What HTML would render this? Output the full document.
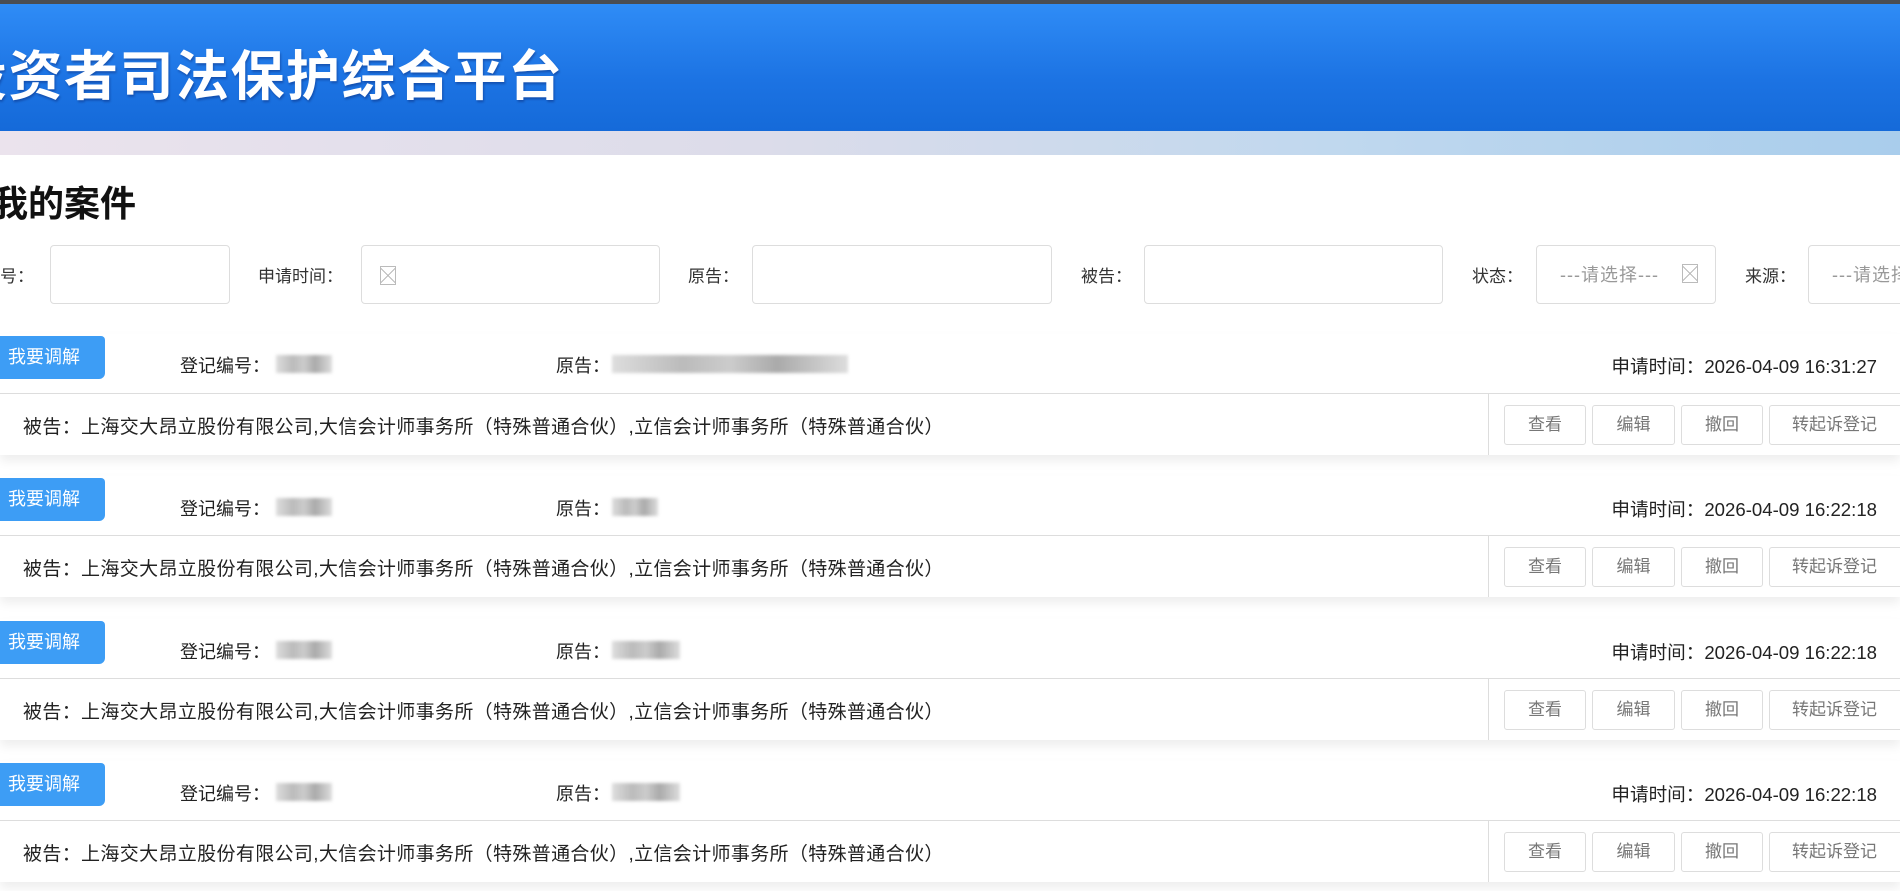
<!DOCTYPE html>
<html><head><meta charset="utf-8"><style>
*{margin:0;padding:0;box-sizing:border-box}
body{width:1900px;height:891px;overflow:hidden;background:#fff;position:relative;font-family:"Liberation Sans","Noto Sans CJK SC",sans-serif;color:#222}
.abs{position:absolute}
.top{left:0;top:0;width:1900px;height:4px;background:#4a4d52}
.hdr{left:0;top:4px;width:1900px;height:127px;background:linear-gradient(#2f8cf6,#1c73e3 60%,#156ad9)}
.htitle{left:-47px;top:32px;font-size:54px;font-weight:bold;color:#fff;letter-spacing:1.5px;white-space:nowrap;text-shadow:1px 2px 2px rgba(0,0,60,.3);font-family:"Noto Sans CJK SC",sans-serif}
.strip{left:0;top:131px;width:1900px;height:24px;background:linear-gradient(90deg,#ebe3ed,#dcdcea 40%,#c0d8ee 70%,#a9cdec)}
.h2{left:-8px;top:175px;font-size:36px;font-weight:bold;color:#111;font-family:"Noto Sans CJK SC",sans-serif}
.lbl{font-size:17px;color:#333;top:262px;white-space:nowrap}
.inp{top:245px;height:59px;border:1px solid #ddd;border-radius:4px;background:#fff}
.ph{font-size:18px;color:#999;top:261px;white-space:nowrap;letter-spacing:1px}
.xb{width:16px;height:19px;border:1.5px solid #bbb;background:linear-gradient(45deg,transparent 47%,#bbb 48%,#bbb 52%,transparent 53%),linear-gradient(-45deg,transparent 47%,#bbb 48%,#bbb 52%,transparent 53%)}
.card{left:0;width:1900px;height:121px;background:#fff;box-shadow:0 6px 10px rgba(0,0,0,.07)}
.card .line{position:absolute;left:0;top:59px;width:1900px;height:1px;background:#ddd}
.card .vl{position:absolute;left:1488px;top:60px;width:1px;height:61px;background:#ddd}
.btn{position:absolute;left:0;top:2px;width:105px;height:43px;background:#3d9df5;color:#fff;font-size:18px;line-height:43px;padding-left:8px;border-radius:0 4px 6px 0;white-space:nowrap}
.t{position:absolute;font-size:18px;color:#222;white-space:nowrap}
.d{position:absolute;font-size:18.6px;color:#222;white-space:nowrap}
.t2{position:absolute;font-size:19px;letter-spacing:0.35px;color:#222;white-space:nowrap}
.blur{position:absolute;height:18px;background:linear-gradient(90deg,#ddd,#bbb 30%,#ccc 50%,#aaa 70%,#ddd);filter:blur(1.5px)}
.ob{position:absolute;top:71px;height:40px;border:1px solid #ddd;border-radius:3px;font-size:17px;color:#777;text-align:center;line-height:38px;background:#fff}
</style></head><body>
<div class="abs top"></div>
<div class="abs hdr"></div>
<div class="abs htitle">投资者司法保护综合平台</div>
<div class="abs strip"></div>
<div class="abs h2">我的案件</div>

<div class="abs lbl" style="left:-17px">编号：</div>
<div class="abs inp" style="left:50px;width:180px"></div>
<div class="abs lbl" style="left:258px">申请时间：</div>
<div class="abs inp" style="left:361px;width:299px"></div>
<div class="abs xb" style="left:380px;top:266px"></div>
<div class="abs lbl" style="left:688px">原告：</div>
<div class="abs inp" style="left:752px;width:300px"></div>
<div class="abs lbl" style="left:1081px">被告：</div>
<div class="abs inp" style="left:1144px;width:299px"></div>
<div class="abs lbl" style="left:1472px">状态：</div>
<div class="abs inp" style="left:1536px;width:180px"></div>
<div class="abs ph" style="left:1560px">---请选择---</div>
<div class="abs xb" style="left:1682px;top:264px"></div>
<div class="abs lbl" style="left:1745px">来源：</div>
<div class="abs inp" style="left:1808px;width:120px"></div>
<div class="abs ph" style="left:1832px">---请选择---</div>

<div class="abs card" style="top:334px">
<div class="btn">我要调解</div>
<div class="t" style="left:180px;top:18px">登记编号：</div><div class="blur" style="left:276px;top:21px;width:56px"></div>
<div class="t" style="left:556px;top:18px">原告：</div><div class="blur" style="left:612px;top:21px;width:236px"></div>
<div class="d" style="right:23px;top:18px">申请时间：2026-04-09 16:31:27</div>
<div class="line"></div><div class="vl"></div>
<div class="t2" style="left:23px;top:78px">被告：上海交大昂立股份有限公司,大信会计师事务所（特殊普通合伙）,立信会计师事务所（特殊普通合伙）</div>
<div class="ob" style="left:1504px;width:82px">查看</div><div class="ob" style="left:1592px;width:83px">编辑</div><div class="ob" style="left:1681px;width:82px">撤回</div><div class="ob" style="left:1769px;width:140px;text-align:left;padding-left:22px">转起诉登记</div>
</div>

<div class="abs card" style="top:476px">
<div class="btn">我要调解</div>
<div class="t" style="left:180px;top:19px">登记编号：</div><div class="blur" style="left:276px;top:22px;width:56px"></div>
<div class="t" style="left:556px;top:19px">原告：</div><div class="blur" style="left:612px;top:22px;width:46px"></div>
<div class="d" style="right:23px;top:19px">申请时间：2026-04-09 16:22:18</div>
<div class="line"></div><div class="vl"></div>
<div class="t2" style="left:23px;top:78px">被告：上海交大昂立股份有限公司,大信会计师事务所（特殊普通合伙）,立信会计师事务所（特殊普通合伙）</div>
<div class="ob" style="left:1504px;width:82px">查看</div><div class="ob" style="left:1592px;width:83px">编辑</div><div class="ob" style="left:1681px;width:82px">撤回</div><div class="ob" style="left:1769px;width:140px;text-align:left;padding-left:22px">转起诉登记</div>
</div>

<div class="abs card" style="top:619px">
<div class="btn">我要调解</div>
<div class="t" style="left:180px;top:19px">登记编号：</div><div class="blur" style="left:276px;top:22px;width:56px"></div>
<div class="t" style="left:556px;top:19px">原告：</div><div class="blur" style="left:612px;top:22px;width:68px"></div>
<div class="d" style="right:23px;top:19px">申请时间：2026-04-09 16:22:18</div>
<div class="line"></div><div class="vl"></div>
<div class="t2" style="left:23px;top:78px">被告：上海交大昂立股份有限公司,大信会计师事务所（特殊普通合伙）,立信会计师事务所（特殊普通合伙）</div>
<div class="ob" style="left:1504px;width:82px">查看</div><div class="ob" style="left:1592px;width:83px">编辑</div><div class="ob" style="left:1681px;width:82px">撤回</div><div class="ob" style="left:1769px;width:140px;text-align:left;padding-left:22px">转起诉登记</div>
</div>

<div class="abs card" style="top:761px">
<div class="btn">我要调解</div>
<div class="t" style="left:180px;top:19px">登记编号：</div><div class="blur" style="left:276px;top:22px;width:56px"></div>
<div class="t" style="left:556px;top:19px">原告：</div><div class="blur" style="left:612px;top:22px;width:68px"></div>
<div class="d" style="right:23px;top:19px">申请时间：2026-04-09 16:22:18</div>
<div class="line"></div><div class="vl"></div>
<div class="t2" style="left:23px;top:78px">被告：上海交大昂立股份有限公司,大信会计师事务所（特殊普通合伙）,立信会计师事务所（特殊普通合伙）</div>
<div class="ob" style="left:1504px;width:82px">查看</div><div class="ob" style="left:1592px;width:83px">编辑</div><div class="ob" style="left:1681px;width:82px">撤回</div><div class="ob" style="left:1769px;width:140px;text-align:left;padding-left:22px">转起诉登记</div>
</div>
</body></html>
